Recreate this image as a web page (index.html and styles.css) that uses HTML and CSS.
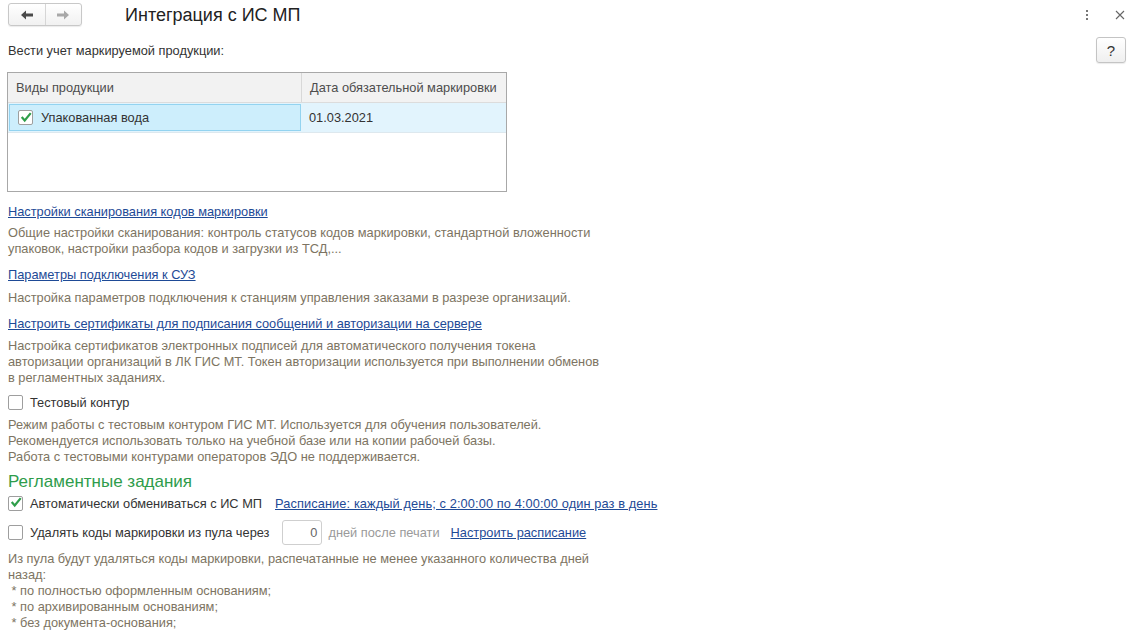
FILE: index.html
```html
<!DOCTYPE html>
<html lang="ru">
<head>
<meta charset="utf-8">
<link rel="stylesheet" href="styles.css">
</head>
<body>
<div class="page">
  <div class="topbar">
    <div class="nav">
      <button class="navbtn"><svg width="14" height="10" viewBox="0 0 14 10"><path d="M1 5 L6 0.5 L6 3.5 L13 3.5 L13 6.5 L6 6.5 L6 9.5 Z" fill="#4a4a4a"/></svg></button>
      <button class="navbtn"><svg width="14" height="10" viewBox="0 0 14 10"><path d="M13 5 L8 0.5 L8 3.5 L1 3.5 L1 6.5 L8 6.5 L8 9.5 Z" fill="#a8a8a8"/></svg></button>
    </div>
    <h1 class="title">Интеграция с ИС МП</h1>
    <div class="spacer"></div>
    <div class="kebab"><span></span><span></span><span></span></div>
    <div class="close"><svg width="10" height="10" viewBox="0 0 10 10"><path d="M1 1 L9 9 M9 1 L1 9" stroke="#666" stroke-width="1.1"/></svg></div>
  </div>

  <div class="toprow">
    <span class="label">Вести учет маркируемой продукции:</span>
    <button class="help">?</button>
  </div>

  <div class="grid">
    <div class="ghead">
      <div class="gc c1">Виды продукции</div>
      <div class="gc c2">Дата обязательной маркировки</div>
    </div>
    <div class="grow">
      <div class="gc c1 sel"><span class="cb checked"><svg width="14" height="12" viewBox="0 0 14 12"><path d="M2 6 L5.5 10 L12.5 1.5" fill="none" stroke="#2f9e4a" stroke-width="2.6"/></svg></span>Упакованная вода</div>
      <div class="gc c2">01.03.2021</div>
    </div>
  </div>

  <div class="block b1">
    <a class="link" href="#">Настройки сканирования кодов маркировки</a>
    <div class="desc">Общие настройки сканирования: контроль статусов кодов маркировки, стандартной вложенности<br>упаковок, настройки разбора кодов и загрузки из ТСД,...</div>
  </div>
  <div class="block b2">
    <a class="link" href="#">Параметры подключения к СУЗ</a>
    <div class="desc">Настройка параметров подключения к станциям управления заказами в разрезе организаций.</div>
  </div>
  <div class="block b3">
    <a class="link" href="#">Настроить сертификаты для подписания сообщений и авторизации на сервере</a>
    <div class="desc">Настройка сертификатов электронных подписей для автоматического получения токена<br>авторизации организаций в ЛК ГИС МТ. Токен авторизации используется при выполнении обменов<br>в регламентных заданиях.</div>
  </div>
  <div class="block b4">
    <label class="check"><span class="cb"></span>Тестовый контур</label>
    <div class="desc">Режим работы с тестовым контуром ГИС МТ. Используется для обучения пользователей.<br>Рекомендуется использовать только на учебной базе или на копии рабочей базы.<br>Работа с тестовыми контурами операторов ЭДО не поддерживается.</div>
  </div>

  <h2 class="group">Регламентные задания</h2>
  <div class="row r1">
    <label class="check"><span class="cb checked"><svg width="14" height="12" viewBox="0 0 14 12"><path d="M2 6 L5.5 10 L12.5 1.5" fill="none" stroke="#2f9e4a" stroke-width="2.6"/></svg></span>Автоматически обмениваться с ИС МП</label>
    <a class="link" href="#">Расписание: каждый день; с 2:00:00 по 4:00:00 один раз в день</a>
  </div>
  <div class="row r2">
    <label class="check"><span class="cb"></span>Удалять коды маркировки из пула через</label>
    <span class="num">0</span>
    <span class="muted">дней после печати</span>
    <a class="link" href="#">Настроить расписание</a>
  </div>
  <div class="desc last">Из пула будут удаляться коды маркировки, распечатанные не менее указанного количества дней<br>назад:<br>&nbsp;* по полностью оформленным основаниям;<br>&nbsp;* по архивированным основаниям;<br>&nbsp;* без документа-основания;</div>
</div>
</body>
</html>
```

FILE: styles.css
```css
* { box-sizing: border-box; }
html, body { margin: 0; padding: 0; background: #fff; }
body {
  font-family: Arial, "Liberation Sans", sans-serif;
  font-size: 12.8px;
  color: #333;
  width: 1132px;
  height: 637px;
  overflow: hidden;
}
.page { padding: 0 6px 0 8px; }

.topbar { display: flex; align-items: center; height: 28px; padding-top: 1px; }
.nav {
  display: flex;
  width: 74px; height: 23px;
  border: 1px solid #c8c8c8;
  border-radius: 3px;
  background: linear-gradient(#ffffff, #f1f1f1);
  box-shadow: 0 1px 1px rgba(0,0,0,0.08);
}
.navbtn {
  flex: 1; border: 0; background: transparent; padding: 0;
  display: flex; align-items: center; justify-content: center;
}
.navbtn + .navbtn { border-left: 1px solid #d6d6d6; }
.title {
  margin: 0 0 0 43px;
  font-size: 18px; font-weight: normal; color: #222;
  line-height: 24px;
}
.spacer { flex: 1; }
.kebab { display: flex; flex-direction: column; gap: 2px; width: 4px; margin-right: 26px; align-items: center; }
.kebab span { width: 2px; height: 2px; background: #777; display: block; }
.close { width: 10px; height: 10px; margin-right: 1px; display: flex; }

.toprow { display: flex; align-items: center; justify-content: space-between; height: 26px; margin-top: 9px; }
.label { color: #333; }
.help {
  width: 30px; height: 26px; padding: 0;
  border: 1px solid #c4c4c4; border-radius: 3px;
  background: linear-gradient(#ffffff, #efefef);
  font-family: Arial, "Liberation Sans", sans-serif;
  font-size: 15px; color: #333;
  box-shadow: 0 1px 1px rgba(0,0,0,0.08);
}

.grid {
  margin: 9px 0 0 -1px;
  width: 500px; height: 120px;
  border: 1px solid #a8a8a8;
}
.ghead { display: flex; height: 30px; background: #f2f2f2; border-bottom: 1px solid #dcdcdc; color: #4d4d4d; }
.grow { display: flex; height: 30px; background: #e2f4fd; border-bottom: 1px solid #dde8ee; }
.gc { display: flex; align-items: center; padding-left: 8px; }
.c1 { width: 294px; }
.ghead .c1 { border-right: 1px solid #d8d8d8; }
.c2 { flex: 1; padding-left: 8px; }
.sel {
  margin: 1px 0 1px 1px; width: 292px;
  background: #cdeefc; border: 1px solid #93d3f0;
  padding-left: 8px;
}
.sel .cb { margin-right: 8px; }

.cb {
  display: inline-flex; align-items: center; justify-content: center;
  width: 15px; height: 15px;
  border: 1px solid #9e9e9e; border-radius: 2px;
  background: #fff;
  margin-right: 7px;
  flex: none;
  overflow: visible;
}
.cb svg { margin-top: -2px; margin-left: 1px; }

.link { color: #1e4a96; text-decoration: underline; text-underline-offset: 1px; }
.desc { color: #7d7462; line-height: 16px; }

.block { display: flex; flex-direction: column; }
.block .link { line-height: 16px; }
.b1 { margin-top: 12px; }
.b1 .desc { margin-top: 5px; }
.b2 { margin-top: 10px; }
.b2 .desc { margin-top: 7px; }
.b3 { margin-top: 10px; }
.b3 .desc { margin-top: 6px; }
.b4 { margin-top: 7px; }
.b4 .desc { margin-top: 6px; }

.check { display: flex; align-items: center; height: 18px; color: #333; }

.group {
  margin: 7px 0 0; font-size: 17px; font-weight: normal;
  color: #2e9c4b; line-height: 20px;
}
.row { display: flex; align-items: center; }
.r1 { margin-top: 2px; height: 18px; }
.r1 .link { margin-left: 13px; letter-spacing: 0.1px; }
.r2 { margin-top: 7px; height: 26px; }
.num {
  margin-left: 13px;
  width: 40px; height: 25px;
  border: 1px solid #cfcfcf; border-radius: 3px;
  display: flex; align-items: center; justify-content: flex-end;
  padding-right: 4px; color: #666;
}
.muted { color: #9a9a9a; margin-left: 6px; }
.r2 .link { margin-left: 11px; }
.desc.last { margin-top: 6px; }
```
